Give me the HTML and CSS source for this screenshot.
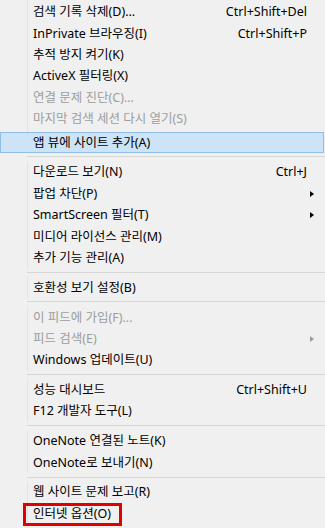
FILE: index.html
```html
<!DOCTYPE html>
<html lang="ko">

<head>
    <meta charset="UTF-8">
    <meta name="viewport" content="width=device-width, initial-scale=1.0">
    <title>도구 메뉴</title>
    <link rel="stylesheet" href="styles.css">
</head>

<body>
    <!-- 도구 메뉴 -->
    <div class="menu">
        <div class="item"><span class="label">검색 기록 삭제(D)...</span><span class="key">Ctrl+Shift+Del</span></div>
        <div class="item"><span class="label">InPrivate 브라우징(I)</span><span class="key">Ctrl+Shift+P</span></div>
        <div class="item"><span class="label">추적 방지 켜기(K)</span></div>
        <div class="item"><span class="label">ActiveX 필터링(X)</span></div>
        <div class="item disabled"><span class="label">연결 문제 진단(C)...</span></div>
        <div class="item disabled"><span class="label">마지막 검색 세션 다시 열기(S)</span></div>
        <div class="item active"><span class="label">앱 뷰에 사이트 추가(A)</span></div>

        <div class="sep"></div>

        <div class="item"><span class="label">다운로드 보기(N)</span><span class="key">Ctrl+J</span></div>
        <div class="item"><span class="label">팝업 차단(P)</span><span class="arrow"></span></div>
        <div class="item"><span class="label">SmartScreen 필터(T)</span><span class="arrow"></span></div>
        <div class="item"><span class="label">미디어 라이선스 관리(M)</span></div>
        <div class="item"><span class="label">추가 기능 관리(A)</span></div>

        <div class="sep"></div>

        <div class="item"><span class="label">호환성 보기 설정(B)</span></div>

        <div class="sep"></div>

        <div class="item disabled"><span class="label">이 피드에 가입(F)...</span></div>
        <div class="item disabled"><span class="label">피드 검색(E)</span><span class="arrow"></span></div>
        <div class="item"><span class="label">Windows 업데이트(U)</span></div>

        <div class="sep"></div>

        <div class="item"><span class="label">성능 대시보드</span><span class="key">Ctrl+Shift+U</span></div>
        <div class="item"><span class="label">F12 개발자 도구(L)</span></div>

        <div class="sep"></div>

        <div class="item"><span class="label">OneNote 연결된 노트(K)</span></div>
        <div class="item"><span class="label">OneNote로 보내기(N)</span></div>

        <div class="sep"></div>

        <div class="item"><span class="label">웹 사이트 문제 보고(R)</span></div>
        <div class="item"><span class="label marked">인터넷 옵션(O)</span></div>
    </div>
</body>

</html>
```

FILE: styles.css
```css
/* 메뉴 기본 스타일 */
body {
    margin: 0;
    background-color: #f0f0f0;
    font-family: "Noto Sans", "Noto Sans CJK KR", sans-serif;
    font-size: 12.5px;
    line-height: 16px;
    color: #000;
    overflow: hidden;
}

.menu {
    padding-top: 1.6px;
    background: linear-gradient(to right, #f0f0f0 27px, #e2e3e3 27px, #e2e3e3 28px, #f0f0f0 28px);
    min-height: 528px;
}

.item {
    display: flex;
    align-items: center;
    height: 21.4px;
    padding: 0 18px 0 33px;
    box-sizing: border-box;
}

.label {
    flex: 1;
    white-space: nowrap;
}

.key {
    white-space: nowrap;
}

.disabled {
    color: #9d9d9d;
}

.active {
    margin-top: 2px;
    margin-right: 1px;
    padding-left: 32px;
    background-color: #cde3f7;
    border: 1px solid #93bde9;
}

.arrow {
    width: 0;
    height: 0;
    margin-right: -7px;
    border-top: 3.5px solid transparent;
    border-bottom: 3.5px solid transparent;
    border-left: 4px solid #000;
}

.disabled .arrow {
    border-left-color: #9d9d9d;
}

.sep {
    height: 8.4px;
    margin-left: 27px;
    background: linear-gradient(#f0f0f0 3.5px, #d7d7d7 3.5px, #d7d7d7 4.5px, #f0f0f0 4.5px);
}

/* 빨간 강조 상자 */
.marked {
    position: relative;
    flex: none;
}

.marked::after {
    content: "";
    position: absolute;
    left: -10px;
    right: -11px;
    top: -3px;
    bottom: -4px;
    border: 3px solid #e00000;
}
```
